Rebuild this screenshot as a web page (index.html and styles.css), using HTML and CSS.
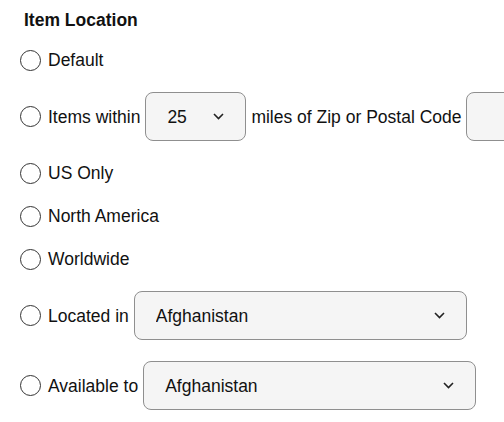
FILE: index.html
```html
<!DOCTYPE html>
<html lang="en">
<head>
<meta charset="UTF-8">
<meta name="viewport" content="width=device-width, initial-scale=1.0">
<title>Item Location</title>
<link rel="stylesheet" href="styles.css">
</head>
<body>

<div class="location-form">
    <h2 class="title">Item Location</h2>

    <div class="options">
        <label class="option">
            <input type="radio" name="location" value="default">
            <span>Default</span>
        </label>

        <div class="option">
            <input type="radio" name="location" value="within" id="within">
            <label for="within">Items within</label>
            <div class="select-box small">
                <select>
                    <option>25</option>
                    <option>50</option>
                    <option>100</option>
                </select>
                <svg class="chevron" width="11" height="7" viewBox="0 0 11 7"><path d="M1 1l4.5 4.5L10 1" fill="none" stroke="#222" stroke-width="1.6"/></svg>
            </div>
            <span>miles of Zip or Postal Code</span>
            <input type="text" class="zip">
        </div>

        <label class="option">
            <input type="radio" name="location" value="us">
            <span>US Only</span>
        </label>

        <label class="option">
            <input type="radio" name="location" value="na">
            <span>North America</span>
        </label>

        <label class="option">
            <input type="radio" name="location" value="world">
            <span>Worldwide</span>
        </label>

        <div class="option">
            <input type="radio" name="location" value="located" id="located">
            <label for="located">Located in</label>
            <div class="select-box wide">
                <select>
                    <option>Afghanistan</option>
                    <option>Albania</option>
                </select>
                <svg class="chevron" width="11" height="7" viewBox="0 0 11 7"><path d="M1 1l4.5 4.5L10 1" fill="none" stroke="#222" stroke-width="1.6"/></svg>
            </div>
        </div>

        <div class="option">
            <input type="radio" name="location" value="available" id="available">
            <label for="available">Available to</label>
            <div class="select-box wide">
                <select>
                    <option>Afghanistan</option>
                    <option>Albania</option>
                </select>
                <svg class="chevron" width="11" height="7" viewBox="0 0 11 7"><path d="M1 1l4.5 4.5L10 1" fill="none" stroke="#222" stroke-width="1.6"/></svg>
            </div>
        </div>
    </div>
</div>

</body>
</html>
```

FILE: styles.css
```css
body {
    font-family: "Liberation Sans", Arial, sans-serif;
    font-size: 17.5px;
    margin: 0;
    padding: 0;
    background-color: #fff;
    color: #111;
    overflow: hidden;
}
.location-form {
    padding: 10px 0 0 20px;
    width: 600px;
}
.title {
    font-size: 17.5px;
    font-weight: bold;
    margin: 0 0 19px 4px;
    line-height: 20px;
}
.options {
    display: flex;
    flex-direction: column;
    gap: 21px;
}
.option {
    display: flex;
    align-items: center;
    gap: 5px;
    min-height: 22px;
    line-height: 20px;
    white-space: nowrap;
}
input[type="radio"] {
    appearance: none;
    -webkit-appearance: none;
    width: 21px;
    height: 21px;
    margin: 0 2px 0 0;
    border: 1.6px solid #333;
    border-radius: 50%;
    background: #fff;
    flex: none;
}
.select-box {
    position: relative;
    flex: none;
}
.select-box select {
    appearance: none;
    -webkit-appearance: none;
    height: 49px;
    padding: 0 21px;
    font-family: inherit;
    font-size: 17.5px;
    color: #111;
    background-color: #f5f5f5;
    border: 1px solid #8f8f8f;
    border-radius: 8px;
}
.select-box.small select {
    width: 101px;
}
.select-box.wide select {
    width: 333px;
}
.chevron {
    position: absolute;
    right: 22px;
    top: 21px;
    pointer-events: none;
}
.zip {
    width: 120px;
    height: 49px;
    box-sizing: border-box;
    background-color: #f5f5f5;
    border: 1px solid #8f8f8f;
    border-radius: 8px;
    flex: none;
}
```
